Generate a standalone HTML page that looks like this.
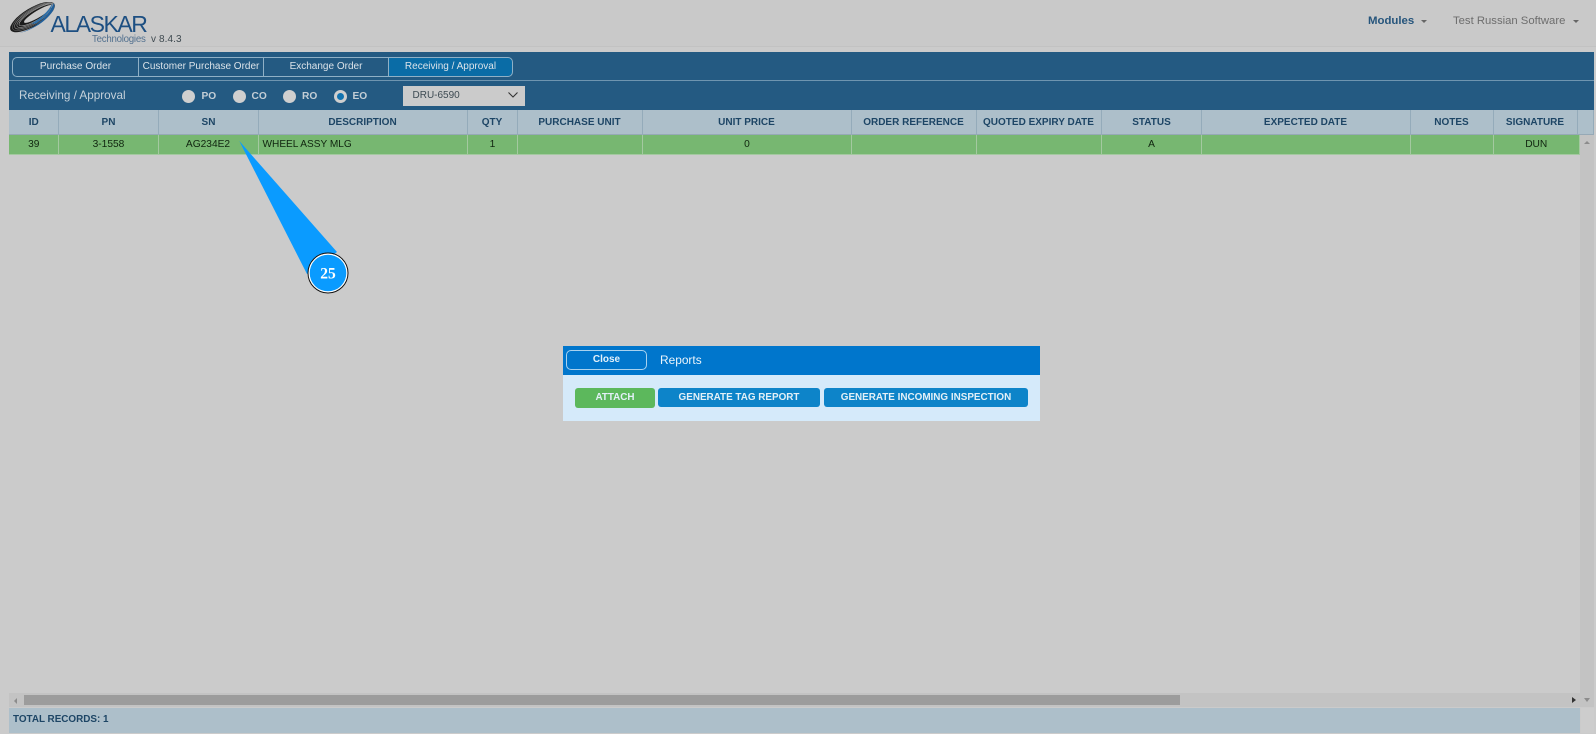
<!DOCTYPE html>
<html><head><meta charset="utf-8"><style>
html,body{margin:0;padding:0;width:1596px;height:734px;overflow:hidden;background:#cbcbcb;font-family:"Liberation Sans",sans-serif}
div,span{position:absolute;box-sizing:border-box;white-space:nowrap}
.tab{top:56.5px;height:20px;line-height:18px;text-align:center;font-size:10.1px;color:#dbe3e9;border:1px solid #8fb0c6;border-right:0}
.h{top:110px;height:25px;line-height:25px;text-align:center;font-size:10px;font-weight:bold;color:#1d4565;background:#adbfca;border-right:1px solid #94abba;border-bottom:1px solid #96a9b6}
.c{top:135px;height:19.5px;line-height:19px;text-align:center;font-size:10.2px;color:#10250f;background:#77b771;border-right:1px solid #a4c9a0;border-bottom:1px solid #a4c9a0}
.r{top:90px;width:13px;height:13px;border-radius:50%;background:#cfcfcf}
.rl{top:89.5px;font-size:10.2px;font-weight:bold;color:#c3ced6;line-height:14px}
.b{top:388px;height:19px;line-height:20px;text-align:center;font-size:9.9px;font-weight:bold;color:#e3f0f7;background:#0d84c9;border-radius:3px}
</style></head><body>
<div style="left:0;top:0;width:1596px;height:47px;background:#c9c9c9;border-bottom:1px solid #c2c2c2"></div>
<svg style="position:absolute;left:8px;top:2px" width="52" height="32" viewBox="0 0 52 32">
<g transform="rotate(-31 24.5 15)" fill="none">
<ellipse cx="24.5" cy="15" rx="25.5" ry="9" fill="#1c1c1c"/>
<ellipse cx="25.5" cy="15" rx="24" ry="7.9" stroke="#666" stroke-width=".6"/>
<ellipse cx="26.5" cy="15" rx="22.5" ry="6.9" stroke="#888" stroke-width=".6"/>
<ellipse cx="27.5" cy="15" rx="21" ry="5.9" stroke="#999" stroke-width=".6"/>
<ellipse cx="28.5" cy="15" rx="19.5" ry="5" stroke="#aaa" stroke-width=".6"/>
<ellipse cx="31" cy="15.3" rx="16.5" ry="3.4" fill="#c9c9c9"/>
<path d="M3 21 C15 26 36 25 50 14 C50 19 42 23 30 24.5 C19 25.5 9 24 3 21Z" fill="#1f5f9c"/>
<path d="M20 20 C30 20.5 41 18.5 48.5 13.5 C46 18 36 22 24 22.5Z" fill="#2f6fa8"/>
</g>
</svg>
<div style="left:50.5px;top:11px;font-size:23px;line-height:26px;letter-spacing:-1.45px;color:#1d4f82;font-weight:normal">ALASKAR</div>
<div style="left:92px;top:33px;font-size:9.7px;line-height:13px;color:#53718f;letter-spacing:-.25px">Technologies</div>
<div style="left:151px;top:33px;font-size:10px;line-height:13px;color:#3f4a50;letter-spacing:.1px">v 8.4.3</div>
<div style="left:1368px;top:14px;font-size:11.4px;line-height:14px;font-weight:bold;color:#26557c">Modules</div>
<div style="left:1421px;top:20px;width:0;height:0;border:3px solid transparent;border-top:3px solid #666;border-bottom:0"></div>
<div style="left:1453px;top:14px;font-size:11.3px;line-height:14px;color:#6d6d6d">Test Russian Software</div>
<div style="left:1573px;top:20px;width:0;height:0;border:3px solid transparent;border-top:3px solid #666;border-bottom:0"></div>

<div style="left:9px;top:52px;width:1585px;height:58.5px;background:#245a82"></div>
<div style="left:9px;top:80px;width:1585px;height:1px;background:#6f95b0"></div>

<div class="tab" style="left:12px;width:126px;border-radius:5px 0 0 5px">Purchase Order</div>
<div class="tab" style="left:138px;width:125px;font-size:10px">Customer Purchase Order</div>
<div class="tab" style="left:263px;width:125px;font-size:10px">Exchange Order</div>
<div class="tab" style="left:388px;width:125px;border-right:1px solid #8fb0c6;background:#0a6ca6;border-radius:0 5px 5px 0;font-size:10px">Receiving / Approval</div>

<div style="left:19px;top:88px;font-size:11.7px;line-height:16px;color:#c5d1da">Receiving / Approval</div>
<div class="r" style="left:182px"></div><div class="rl" style="left:201.5px">PO</div>
<div class="r" style="left:232.5px"></div><div class="rl" style="left:251.5px">CO</div>
<div class="r" style="left:282.5px"></div><div class="rl" style="left:302px">RO</div>
<div class="r" style="left:333.5px;background:#1273b0;border:3.5px solid #cfcfcf"></div><div class="rl" style="left:352.5px">EO</div>
<div style="left:403px;top:86px;width:122px;height:19.5px;background:#cbcbcb;color:#3d4a52;font-size:10px;line-height:19.5px;padding-left:9.5px">DRU-6590</div>
<svg style="position:absolute;left:507px;top:91px" width="12" height="8" viewBox="0 0 12 8"><path d="M1.5 1.5L6 6L10.5 1.5" fill="none" stroke="#333" stroke-width="1.1"/></svg>

<div class="h" style="left:9px;width:49.5px;padding-left:1px">ID</div>
<div class="h" style="left:58.5px;width:100px;padding-left:1px">PN</div>
<div class="h" style="left:158.5px;width:100px;padding-left:1px">SN</div>
<div class="h" style="left:258.5px;width:209px">DESCRIPTION</div>
<div class="h" style="left:467.5px;width:50px">QTY</div>
<div class="h" style="left:517.5px;width:125px">PURCHASE UNIT</div>
<div class="h" style="left:642.5px;width:209px">UNIT PRICE</div>
<div class="h" style="left:851.5px;width:125px">ORDER REFERENCE</div>
<div class="h" style="left:976.5px;width:125px">QUOTED EXPIRY DATE</div>
<div class="h" style="left:1101.5px;width:100px;padding-left:1px">STATUS</div>
<div class="h" style="left:1201.5px;width:209px">EXPECTED DATE</div>
<div class="h" style="left:1410.5px;width:83px">NOTES</div>
<div class="h" style="left:1493.5px;width:84px">SIGNATURE</div>
<div class="h" style="left:1577.5px;width:16.5px"></div>

<div class="c" style="left:9px;width:49.5px;padding-left:1px">39</div>
<div class="c" style="left:58.5px;width:100px;padding-left:1px">3-1558</div>
<div class="c" style="left:158.5px;width:100px">AG234E2</div>
<div class="c" style="left:258.5px;width:209px;text-align:left;padding-left:4px;font-size:10.1px">WHEEL ASSY MLG</div>
<div class="c" style="left:467.5px;width:50px;padding-left:1px">1</div>
<div class="c" style="left:517.5px;width:125px"></div>
<div class="c" style="left:642.5px;width:209px;padding-left:1px">0</div>
<div class="c" style="left:851.5px;width:125px"></div>
<div class="c" style="left:976.5px;width:125px"></div>
<div class="c" style="left:1101.5px;width:100px;padding-left:1px">A</div>
<div class="c" style="left:1201.5px;width:209px"></div>
<div class="c" style="left:1410.5px;width:83px"></div>
<div class="c" style="left:1493.5px;width:86.5px">DUN</div>

<div style="left:1580px;top:135px;width:14px;height:572px;background:#c3c3c3"></div>
<div style="left:1584px;top:141px;width:0;height:0;border:3px solid transparent;border-bottom:3px solid #8c8c8c;border-top:0"></div>
<div style="left:1584px;top:698px;width:0;height:0;border:3.5px solid transparent;border-top:4px solid #8c8c8c;border-bottom:0"></div>
<div style="left:9px;top:693px;width:1571px;height:14px;background:#c3c3c3"></div>
<div style="left:23.5px;top:695px;width:1156.5px;height:10px;background:#9c9c9c"></div>
<div style="left:14px;top:698px;width:0;height:0;border:3px solid transparent;border-right:3px solid #8c8c8c;border-left:0"></div>
<div style="left:1572px;top:697px;width:0;height:0;border:3.5px solid transparent;border-left:4px solid #333;border-right:0"></div>
<div style="left:9px;top:708px;width:1571px;height:25px;background:#adbfca;color:#1d4565;font-size:9.9px;font-weight:bold;line-height:24px;padding-left:4px">TOTAL RECORDS: 1</div>
<div style="left:1581px;top:708px;width:13px;height:25px;background:#cdcdcd"></div>

<div style="left:563px;top:346px;width:477px;height:75px;background:#d5eafa"></div>
<div style="left:563px;top:346px;width:477px;height:28.5px;background:#0076cc"></div>
<div style="left:566px;top:350px;width:81px;height:20px;border:1px solid #a8d2ef;border-radius:5px;text-align:center;color:#e4f1fa;font-size:10px;font-weight:bold;line-height:18px">Close</div>
<div style="left:660px;top:352px;font-size:11.9px;line-height:16px;color:#eaf4fb">Reports</div>
<div class="b" style="left:575px;width:80px;height:20px;background:#5cb85c">ATTACH</div>
<div class="b" style="left:658px;width:162px">GENERATE TAG REPORT</div>
<div class="b" style="left:824px;width:204px">GENERATE INCOMING INSPECTION</div>

<svg style="position:absolute;left:230px;top:135px" width="125" height="165" viewBox="230 135 125 165">
<path d="M239.3 141L337 252L307 274Z" fill="#0a9bff"/>
<circle cx="328" cy="273" r="20" fill="#fff" stroke="#111" stroke-width="1"/>
<circle cx="328" cy="273" r="18.3" fill="#0a9bff"/>
<text x="328" y="278.5" text-anchor="middle" font-family="Liberation Serif" font-weight="bold" font-size="15.5" fill="#fff">25</text>
</svg>
</body></html>
